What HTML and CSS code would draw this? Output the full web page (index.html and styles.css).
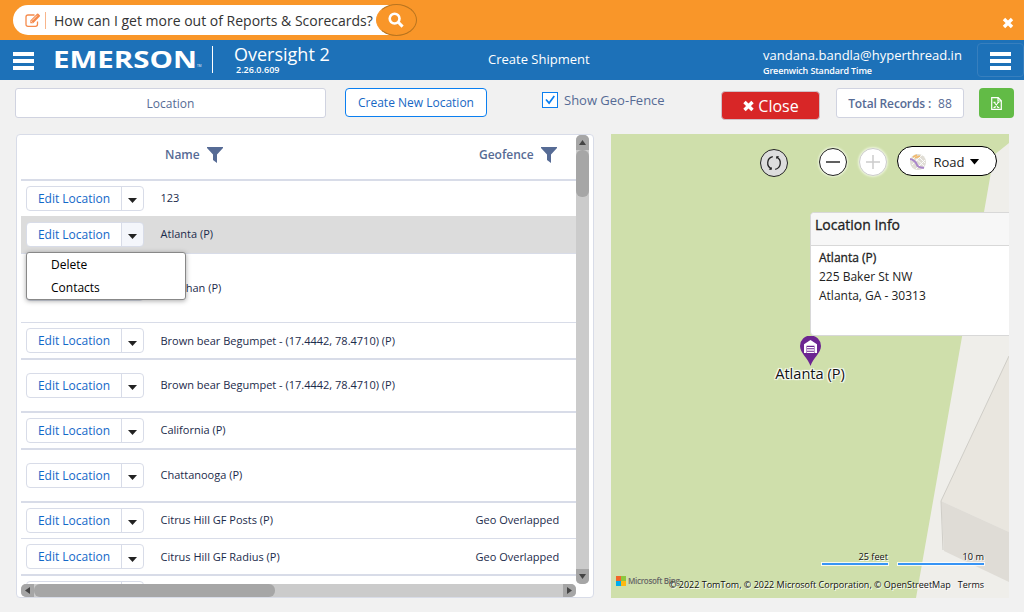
FILE: index.html
```html
<!DOCTYPE html>
<html lang="en">
<head>
<meta charset="utf-8">
<title>Oversight 2</title>
<link rel="stylesheet" href="styles.css">
</head>
<body>
<header class="helpbar">
  <div class="ask">
    <svg class="ask-edit" width="16" height="15" viewBox="0 0 16 15"><path d="M12.5 8.5v2.8q0 2-2 2h-7.500q-2 0-2-2V4q0-2 2-2h6.500" fill="none" stroke="#f58a4b" stroke-width="1.3"/><path d="M5.300 7.400 12 .7q.7-.5 1.300 0l1.500 1.500q.6.600 0 1.300L8.200 10.200H5.300z" fill="#f58a4b"/><path d="M7 7.600 12 2.600M6 8.100l1.400 1.400" stroke="#fff" stroke-width=".7"/></svg>
    <span class="ask-sep"></span>
    <span class="ask-text">How can I get more out of Reports &amp; Scorecards?</span>
  </div>
  <button class="search"><svg width="16" height="16" viewBox="0 0 16 16"><circle cx="6.600" cy="6.600" r="4.900" fill="none" stroke="#fff" stroke-width="2.600"/><path d="m10.300 10.300 4.300 4.300" stroke="#fff" stroke-width="3"/></svg></button>
  <svg class="dismiss" width="12" height="12" viewBox="0 0 12 12"><path d="m2 2 8 8M10 2l-8 8" stroke="#fff" stroke-width="3.400"/></svg>
</header>
<nav class="nav">
  <span class="burger"><i></i><i></i><i></i></span>
  <svg class="logo" width="150" height="30" viewBox="0 0 150 30"><text class="logo-word" x="-1" y="22.500" textLength="144" lengthAdjust="spacingAndGlyphs">EMERSON</text><text class="logo-tm" x="143" y="22">TM</text></svg>
  <span class="nav-line"></span>
  <div class="product"><span class="product-name">Oversight 2</span><span class="product-version">2.26.0.609</span></div>
  <span class="nav-title">Create Shipment</span>
  <div class="user"><span class="user-mail">vandana.bandla@hyperthread.in</span><span class="user-zone">Greenwich Standard Time</span></div>
  <button class="nav-menu"><span class="burger"><i></i><i></i><i></i></span></button>
</nav>
<div class="toolbar">
  <div class="field">Location</div>
  <button class="create">Create New Location</button>
  <label class="fence"><span class="check"><svg width="14" height="14" viewBox="0 0 14 14"><path d="m3 6.500 3.100 3.600 5.200-7" fill="none" stroke="#0b7ff0" stroke-width="1.700"/></svg></span><span class="fence-text">Show Geo-Fence</span></label>
  <button class="close"><svg width="13" height="12" viewBox="0 0 12 12"><path d="m2 2 8 8M10 2l-8 8" stroke="#fff" stroke-width="3.400"/></svg><span>Close</span></button>
  <div class="total"><b>Total Records :</b><span>88</span></div>
  <button class="excel"><svg width="11" height="13" viewBox="0 0 11 13"><path d="M.7.700h6.500l3.100 3.100v8.500H.7zM7 .8V4h3.200" fill="none" stroke="#fff" stroke-width="1.200"/><path d="m3.300 5.500 4 5M7.300 5.500l-4 5M2.500 5.400h2M6.300 5.400h2M2.500 10.500h2M6.300 10.500h2" stroke="#fff" stroke-width="1.100"/></svg></button>
</div>
<main class="main">
  <section class="panel">
    <div class="grid">
      <div class="grid-head">
        <span class="head-name">Name</span><svg class="funnel" width="16" height="16" viewBox="0 0 16 16"><path d="M0 0h16v1L10 7.500V16l-4-3V7.500L0 1z"/></svg>
        <span class="head-geo">Geofence</span><svg class="funnel" width="16" height="16" viewBox="0 0 16 16"><path d="M0 0h16v1L10 7.500V16l-4-3V7.500L0 1z"/></svg>
      </div>
      <div class="row r35"><div class="split"><span>Edit Location</span><i></i></div><span class="name">123</span></div>
      <div class="row r38 selected"><div class="split"><span>Edit Location</span><i></i></div><span class="name">Atlanta (P)</span>
        <div class="menu"><span>Delete</span><span>Contacts</span></div>
      </div>
      <div class="row r69"><div class="split"><span>Edit Location</span><i></i></div><span class="name">Bhachan (P)</span></div>
      <div class="row r37"><div class="split low"><span>Edit Location</span><i></i></div><span class="name level">Brown bear Begumpet - (17.4442, 78.4710) (P)</span></div>
      <div class="row r53"><div class="split"><span>Edit Location</span><i></i></div><span class="name">Brown bear Begumpet - (17.4442, 78.4710) (P)</span></div>
      <div class="row r37"><div class="split"><span>Edit Location</span><i></i></div><span class="name">California (P)</span></div>
      <div class="row r53"><div class="split"><span>Edit Location</span><i></i></div><span class="name">Chattanooga (P)</span></div>
      <div class="row r36"><div class="split"><span>Edit Location</span><i></i></div><span class="name">Citrus Hill GF Posts (P)</span><span class="geo">Geo Overlapped</span></div>
      <div class="row r37"><div class="split low"><span>Edit Location</span><i></i></div><span class="name level">Citrus Hill GF Radius (P)</span><span class="geo level">Geo Overlapped</span></div>
      <div class="row last"><div class="split"><span></span></div></div>
    </div>
    <div class="vbar"><span class="vend top"><svg width="7" height="5"><path d="M0 5 3.500 0 7 5z"/></svg></span><span class="vthumb"></span><span class="vend bottom"><svg width="7" height="5"><path d="M0 0h7L3.500 5z"/></svg></span></div>
    <div class="hbar"><span class="hend left"><svg width="5" height="7"><path d="M5 0v7L0 3.500z"/></svg></span><span class="hthumb"></span><span class="hend right"><svg width="5" height="7"><path d="M0 0v7l5-3.500z"/></svg></span></div>
  </section>
  <section class="map">
    <svg class="ground" width="398" height="464" viewBox="0 0 398 464">
      <rect width="398" height="464" fill="#cfdfab"/>
      <path d="M398 9 383 21 373 78 305 464H398z" fill="#efeeea"/>
      <path d="M398 222 330 367 398 398z" fill="#e9e6df"/>
      <path d="m330 367 68 31v50l-65-31z" fill="#dfdcd6"/>
      <path d="m398 222-68 145 2 49" fill="none" stroke="#cfcdc7"/>
    </svg>
    <button class="round refresh"><svg width="18" height="18" viewBox="0 0 18 18"><path d="M6.500 14.800A6.400 6.400 0 0 1 7.800 2.700M11.500 3.200a6.400 6.400 0 0 1-1.300 12.100" fill="none" stroke="#222" stroke-width="1.300"/><path d="m6.800 13-.3 3-2.800-.6zM11.200 5l.3-3 2.800.6z" fill="#222"/></svg></button>
    <button class="round minus"><svg width="16" height="16"><path d="M1 8h14" stroke="#444" stroke-width="1.700"/></svg></button>
    <button class="round plus"><svg width="16" height="16"><path d="M1 8h14M8 1v14" stroke="#ccc" stroke-width="1.500"/></svg></button>
    <button class="style"><svg width="16" height="16" viewBox="0 0 16 16"><circle cx="8" cy="8" r="8" fill="#e0ddd5"/><path d="m3 2 11 10M2 11 12 1M6 15l9-9M1 7l5-5M9 3l6 6" stroke="#fff" stroke-width=".9"/><path d="m3 3 4-2M5 4l5-2" stroke="#f1b96d" stroke-width="1.800"/><path d="M0 5c4 1 6 3 7 6s4 2 7 3" fill="none" stroke="#a985c9" stroke-width="2"/></svg><span>Road</span><i></i></button>
    <div class="info"><div class="info-head">Location Info</div><div class="info-body"><b>Atlanta (P)</b><span>225 Baker St NW</span><span>Atlanta, GA - 30313</span></div></div>
    <div class="pin"><svg width="21" height="30" viewBox="0 0 21 30"><path d="M10.500 30C8 22 0 17 0 10a10.500 10.500 0 0 1 21 0c0 7-8 12-10.500 20z" fill="#6c2591"/><path d="M4 8.300 10.500 4 17 8.300V17H14.500V9.800h-8V17H4z" fill="#fff"/><path d="M7 11.700h7M7 14h7M7 16.300h7" stroke="#fff" stroke-width="1.300"/></svg><span>Atlanta (P)</span></div>
    <div class="scale feet">25 feet</div>
    <div class="scale metres">10 m</div>
    <div class="bing"><svg width="10" height="10"><path d="M0 0h5v5H0z" fill="#f26529"/><path d="M5 0h5v5H5z" fill="#8dc63f"/><path d="M0 5h5v5H0z" fill="#00adee"/><path d="M5 5h5v5H5z" fill="#fdb813"/></svg><span>Microsoft Bing</span></div>
    <div class="credits"><span>© 2022 TomTom, © 2022 Microsoft Corporation, © OpenStreetMap</span><span>Terms</span></div>
  </section>
</main>
</body>
</html>
```
FILE: styles.css
```css
* { box-sizing: border-box; }
body { margin: 0; width: 1024px; height: 612px; overflow: hidden; background: #f1f1f1; font-family: "Open Sans", "Noto Sans", sans-serif; color: #1b2b4b; white-space: nowrap; }
button { font-family: inherit; margin: 0; padding: 0; display: flex; align-items: center; justify-content: center; }
svg { flex: none; display: block; }

.helpbar { display: flex; height: 40px; background: #f99629; }
.ask { display: flex; align-items: center; width: 378px; height: 30px; margin: 5px 0 0 13px; padding-left: 12px; background: #fff; border-radius: 15px 0 0 15px; }
.ask-sep { width: 1px; height: 17px; margin: 0 8px 0 4px; background: #f8b58b; }
.ask-text { font-size: 14px; color: #333; }
.search { width: 41px; height: 32px; margin: 4px 0 0 -15px; background: #f99629; border: 1px solid #b8741f; border-left-color: #f99629; border-radius: 50%; padding-right: 2px; }
.dismiss { margin: 17px 10px 0 auto; }

.nav { display: flex; height: 40px; background: #1d71b8; color: #fff; }
.burger { display: flex; flex-direction: column; gap: 3px; width: 21px; margin: 12px 0 0 13px; }
.burger i { height: 4px; background: #fff; }
.logo { margin: 5px 0 0 20px; overflow: visible; }
.logo-word { font: 700 24px "Open Sans", sans-serif; fill: #fff; }
.logo-tm { font: 3px "Open Sans", sans-serif; fill: #fff; }
.nav-line { width: 1px; height: 27px; margin: 6px 21px 0 8px; background: #fff; }
.product { display: flex; flex-direction: column; width: 254px; }
.product-name { height: 23px; font-size: 18px; line-height: 29px; }
.product-version { margin-left: 2px; font-size: 9px; line-height: 13px; font-weight: 600; }
.nav-title { width: 275px; font-size: 13px; line-height: 39px; }
.user { display: flex; flex-direction: column; width: 214px; }
.user-mail { height: 24px; font-size: 13px; line-height: 31px; }
.user-zone { font-size: 9px; line-height: 14px; font-weight: 600; letter-spacing: -.15px; }
.nav-menu { width: 47px; height: 34px; margin-top: 3px; background: none; border: 1px solid #377fbe; border-radius: 4px; align-items: flex-start; }
.nav-menu .burger { margin: 8px 0 0; width: 21px; }

.toolbar { display: flex; height: 54px; color: #566b95; font-size: 13px; }
.field { width: 311px; height: 30px; margin: 8px 0 0 15px; background: #fff; border: 1px solid #d0d3e0; border-radius: 3px; text-align: center; line-height: 29px; font-size: 12px; }
.create { width: 142px; height: 29px; margin: 8px 0 0 19px; background: #fff; border: 1px solid #0b7ff0; border-radius: 4px; color: #1667c4; font-size: 12px; }
.fence { display: flex; gap: 6px; width: 179px; height: 20px; margin: 10px 0 0 55px; align-items: center; }
.check { width: 16px; height: 16px; border: 1px solid #0b7ff0; background: #fff; }
.fence-text { font-size: 13px; }
.close { gap: 3px; width: 99px; height: 29px; margin: 11px 0 0; background: #d82627; border: 1px solid #d0c0c8; border-radius: 4px; color: #fff; font-size: 16px; }
.total { display: flex; justify-content: center; align-items: center; gap: 7px; width: 128px; height: 30px; margin: 8px 0 0 16px; background: #fff; border: 1px solid #d0d3e0; border-radius: 3px; font-size: 12px; }
.total b { font-weight: 600; letter-spacing: -.15px; }
.excel { width: 35px; height: 30px; margin: 8px 0 0 15px; background: #62bb46; border: 0; border-radius: 4px; }

.main { display: flex; gap: 17px; padding-left: 16px; }
.panel { display: grid; grid-template-columns: 555px 13px; grid-template-rows: 449px 13px; width: 578px; height: 464px; padding-left: 4px; background: #fff; border: 1px solid #d8dce8; border-radius: 4px; }
.grid { height: 449px; }
.grid-head { display: flex; height: 46px; padding: 12px 0 0 144px; border-bottom: 2px solid #d8dce8; color: #566b95; font-size: 12px; font-weight: 600; line-height: 15px; }
.head-name { width: 42px; }
.head-geo { width: 62px; margin-left: 256px; }
.funnel { fill: #566b95; }
.row { position: relative; display: flex; align-items: center; padding-left: 5px; border-bottom: 0 solid #d8dce8; font-size: 11px; }
.r35 { height: 35px; }
.r36 { height: 36px; border-bottom-width: 1px; }
.r37 { height: 37px; border-bottom-width: 2px; }
.r38 { height: 38px; border-bottom-width: 1px; }
.r53 { height: 53px; border-bottom-width: 2px; }
.r69 { height: 69px; border-bottom-width: 1px; }
.last { height: 8px; overflow: hidden; align-items: flex-start; padding-top: 5px; }
.selected { background: #dcdcdc; }
.split { display: flex; flex: none; width: 118px; height: 25px; border: 1px solid #d8dce8; border-radius: 4px; background: #fff; color: #1368c8; font-size: 12px; line-height: 24px; }
.split span { width: 95px; text-align: center; border-right: 1px solid #d8dce8; }
.split i { width: 9px; height: 5px; margin: 11px 0 0 6px; background: #222; clip-path: polygon(0 0, 100% 0, 50% 100%); }
.split.low i { margin-top: 12px; }
.selected .split { background: linear-gradient(90deg, #fff 95px, #f4f6fb 95px); }
.name { width: 315px; margin-left: 16.500px; line-height: 15px; padding-bottom: 2px; }
.geo { line-height: 15px; padding-bottom: 2px; }
.level { padding-bottom: 0; }
.menu { position: absolute; z-index: 3; left: 5px; top: 36px; width: 160px; height: 48px; padding: 0 0 0 24px; display: flex; flex-direction: column; background: #fff; border: 1px solid #888; border-radius: 3px; box-shadow: 0 1px 5px rgba(0,0,0,.35); color: #000; font-size: 12px; line-height: 23px; }
.vbar { position: relative; height: 449px; background: #cbcbcb; border-radius: 5px; overflow: hidden; }
.vend, .hend { display: flex; align-items: center; justify-content: center; position: absolute; background: #a6a6a6; fill: #444; }
.vend { width: 13px; height: 15px; left: 0; }
.top { top: 0; }
.bottom { bottom: 0; }
.vthumb { position: absolute; left: 0; top: 15px; width: 13px; height: 47px; border-radius: 6px; background: #a6a6a6; }
.hbar { position: relative; background: #cbcbcb; border-radius: 5px; overflow: hidden; }
.hend { width: 13px; height: 13px; top: 0; }
.left { left: 0; }
.right { right: 0; }
.hthumb { position: absolute; left: 13px; top: 0; width: 241px; height: 13px; border-radius: 6px; background: #a6a6a6; }

.map { position: relative; width: 398px; height: 464px; overflow: hidden; color: #222; }
.round { position: absolute; width: 28px; height: 28px; border-radius: 50%; background: #fff; border: 1px solid #222; }
.refresh { left: 149px; top: 15px; background: #ddd; }
.minus { left: 208px; top: 14px; box-shadow: 0 0 2px 1px #edf5dc; }
.plus { left: 248px; top: 14px; border-color: #ccc; box-shadow: 0 0 2px 1px #edf5dc; }
.style { position: absolute; left: 286px; top: 12px; width: 100px; height: 30px; padding: 1px 4px 0 0; border: 1px solid #000; border-radius: 15px; background: #fff; color: #222; font-size: 13px; }
.style span { margin: 0 5px 0 7px; }
.style i { width: 10px; height: 6px; background: #000; clip-path: polygon(0 0, 100% 0, 50% 100%); }
.info { position: absolute; left: 199px; top: 78px; width: 260px; height: 124px; background: #fff; border: 1px solid #d8d8d8; border-radius: 4px; }
.info-head { height: 33px; padding-left: 4px; background: #f7f7f7; border-bottom: 1px solid #d8d8d8; border-radius: 4px 4px 0 0; font-size: 14px; line-height: 24px; -webkit-text-stroke: .3px #222; }
.info-body { display: flex; flex-direction: column; padding: 2px 0 0 8px; font-size: 12px; line-height: 19px; }
.info-body b { font-weight: 400; -webkit-text-stroke: .3px #222; }
.pin { position: absolute; left: 149px; top: 202px; width: 100px; display: flex; flex-direction: column; align-items: center; font-size: 14.600px; line-height: 15px; color: #111; text-shadow: 0 0 1px #fff, 1px 1px 1px #fff, -1px -1px 1px #fff, 1px -1px 1px #fff, -1px 1px 1px #fff; }
.scale { position: absolute; top: 415px; height: 16px; text-align: right; font-size: 9.200px; line-height: 15px; color: #111; text-shadow: 1px 1px 0 #fff; }
.scale::after { content: ""; position: absolute; left: 0; bottom: 0; width: 100%; height: 2px; background: #3794f5; box-shadow: 0 0 0 1px rgba(255,255,255,.8); }
.feet { left: 211px; width: 66px; }
.metres { left: 287px; width: 86px; }
.bing { position: absolute; left: 5px; top: 442px; display: flex; gap: 2px; color: #666; font-size: 8px; letter-spacing: -.3px; line-height: 10px; font-weight: 600; }
.credits { position: absolute; right: 25px; top: 444px; display: flex; gap: 7px; font-size: 9px; line-height: 13px; color: #111; text-shadow: 1px 1px 0 #fff; }
```
